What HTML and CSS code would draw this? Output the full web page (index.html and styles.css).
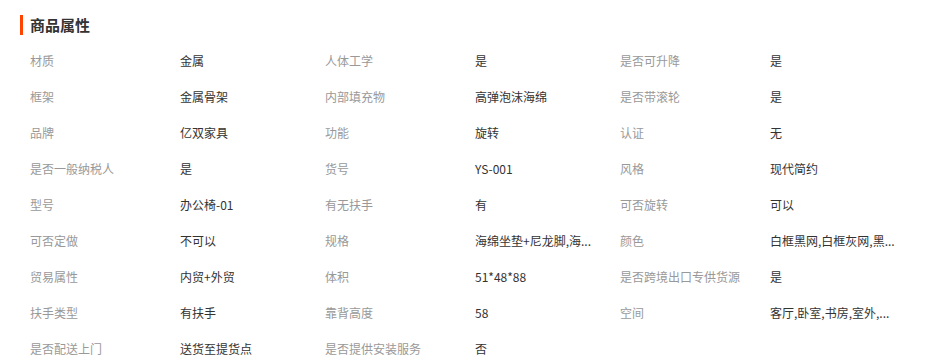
FILE: index.html
```html
<!DOCTYPE html>
<html lang="zh">
<head>
<meta charset="utf-8">
<link rel="stylesheet" href="styles.css">
</head>
<body>
<div class="attrs">
  <h2 class="title">商品属性</h2>
  <div class="grid">
    <div class="k">材质</div><div class="v">金属</div>
    <div class="k">人体工学</div><div class="v">是</div>
    <div class="k">是否可升降</div><div class="v">是</div>

    <div class="k">框架</div><div class="v">金属骨架</div>
    <div class="k">内部填充物</div><div class="v">高弹泡沫海绵</div>
    <div class="k">是否带滚轮</div><div class="v">是</div>

    <div class="k">品牌</div><div class="v">亿双家具</div>
    <div class="k">功能</div><div class="v">旋转</div>
    <div class="k">认证</div><div class="v">无</div>

    <div class="k">是否一般纳税人</div><div class="v">是</div>
    <div class="k">货号</div><div class="v">YS-001</div>
    <div class="k">风格</div><div class="v">现代简约</div>

    <div class="k">型号</div><div class="v">办公椅-01</div>
    <div class="k">有无扶手</div><div class="v">有</div>
    <div class="k">可否旋转</div><div class="v">可以</div>

    <div class="k">可否定做</div><div class="v">不可以</div>
    <div class="k">规格</div><div class="v">海绵坐垫+尼龙脚,海...</div>
    <div class="k">颜色</div><div class="v">白框黑网,白框灰网,黑...</div>

    <div class="k">贸易属性</div><div class="v">内贸+外贸</div>
    <div class="k">体积</div><div class="v">51*48*88</div>
    <div class="k">是否跨境出口专供货源</div><div class="v">是</div>

    <div class="k">扶手类型</div><div class="v">有扶手</div>
    <div class="k">靠背高度</div><div class="v">58</div>
    <div class="k">空间</div><div class="v">客厅,卧室,书房,室外,...</div>

    <div class="k">是否配送上门</div><div class="v">送货至提货点</div>
    <div class="k">是否提供安装服务</div><div class="v">否</div>
  </div>
</div>
</body>
</html>
```
FILE: styles.css
```css
html, body {
  margin: 0;
  padding: 0;
  background: #fff;
}
body {
  font-family: "Noto Sans CJK SC", "Microsoft YaHei", sans-serif;
  font-size: 12px;
  color: #333;
}
.attrs {
  padding: 15px 0 0 20px;
}
.title {
  margin: 0;
  height: 20px;
  line-height: 20px;
  font-size: 15px;
  font-weight: bold;
  color: #333;
  border-left: 3px solid #ff4400;
  padding-left: 7px;
  display: flex;
  align-items: center;
}
.grid {
  margin-top: 7px;
  padding-left: 10px;
  display: grid;
  grid-template-columns: 150px 145px 150px 145px 150px 145px;
  grid-auto-rows: 36px;
  align-items: center;
}
.k {
  color: #999;
  white-space: nowrap;
}
.v {
  color: #333;
  white-space: nowrap;
}
```
